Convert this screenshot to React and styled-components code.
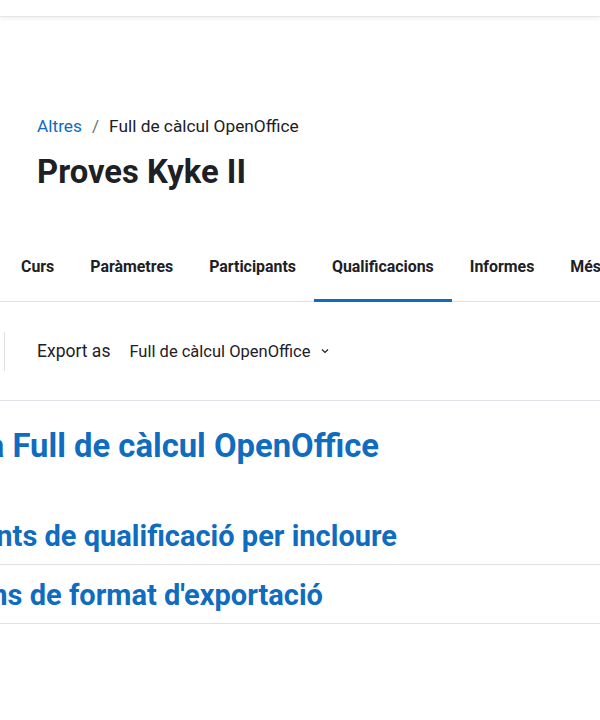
import React from "react";
import styled, { createGlobalStyle } from "styled-components";

const Global = createGlobalStyle`
  html, body { margin: 0; padding: 0; background: #fff; }
  body {
    width: 600px;
    overflow: hidden;
    font-family: Roboto, "Liberation Sans", sans-serif;
    color: #1d2125;
  }
`;

const Page = styled.div`
  width: 600px;
  overflow: hidden;
`;

const TopBar = styled.header`
  height: 16px;
  background: #fff;
  border-bottom: 1px solid #e6e6e6;
  box-shadow: 0 2px 4px rgba(0, 0, 0, 0.06);
`;

const PageHeader = styled.div`
  padding: 97px 0 0 37px;
`;

const Breadcrumb = styled.nav`
  display: flex;
  align-items: center;
  gap: 10px;
  font-size: 17.3px;
  line-height: 24px;
`;

const Crumb = styled.a`
  color: ${(p) => (p.$link ? "#0f6cbf" : "#1d2125")};
  text-decoration: none;
`;

const Sep = styled.span`
  color: #6a737b;
`;

const Title = styled.h1`
  margin: 14px 0 0;
  font-size: 32.8px;
  line-height: 40px;
  font-weight: 700;
`;

const Tabs = styled.nav`
  margin-top: 48px;
  display: flex;
  padding-left: 3px;
  border-bottom: 1px solid #dee2e6;
  white-space: nowrap;
`;

const Tab = styled.a`
  display: block;
  padding: 16px 18px 21px;
  font-size: 15.9px;
  line-height: 22px;
  font-weight: 700;
  color: #1d2125;
  text-decoration: none;
  border-bottom: 3px solid ${(p) => (p.$active ? "#0f6cbf" : "transparent")};
  margin-bottom: -1px;
`;

const Toolbar = styled.div`
  display: flex;
  align-items: center;
  height: 98px;
  border-bottom: 1px solid #dee2e6;
`;

const Divider = styled.span`
  width: 1px;
  height: 39px;
  margin-left: 4px;
  background: #dee2e6;
`;

const ToolLabel = styled.span`
  margin-left: 32px;
  font-size: 17.5px;
`;

const SelectBox = styled.div`
  display: flex;
  align-items: center;
  gap: 9px;
  margin-left: 19px;
  font-size: 16.5px;
  color: #1d2125;
`;

const Content = styled.main`
  padding-top: 25px;
`;

const Heading = styled.h2`
  display: flex;
  justify-content: flex-end;
  width: ${(p) => p.$end}px;
  margin: 0;
  font-size: 32.8px;
  line-height: 40px;
  font-weight: 700;
  color: #0f6cbf;
  white-space: nowrap;
`;

const Section = styled.section`
  border-bottom: 1px solid #dee2e6;
  padding: ${(p) => p.$pad};
`;

const SectionTitle = styled.h3`
  display: flex;
  justify-content: flex-end;
  width: ${(p) => p.$end}px;
  margin: 0;
  font-size: 29px;
  line-height: 34px;
  font-weight: 700;
  color: #0f6cbf;
  white-space: nowrap;
`;

const Chevron = () => (
  <svg width="10" height="10" viewBox="0 0 10 10" fill="none">
    <path d="M2 3.5 L5 6.5 L8 3.5" stroke="#1d2125" strokeWidth="1.2" />
  </svg>
);

export default function App() {
  return (
    <Page>
      <Global />
      <TopBar />
      <PageHeader>
        <Breadcrumb>
          <Crumb $link href="#">Altres</Crumb>
          <Sep>/</Sep>
          <Crumb>Full de càlcul OpenOffice</Crumb>
        </Breadcrumb>
        <Title>Proves Kyke II</Title>
      </PageHeader>
      <Tabs>
        <Tab>Curs</Tab>
        <Tab>Paràmetres</Tab>
        <Tab>Participants</Tab>
        <Tab $active>Qualificacions</Tab>
        <Tab>Informes</Tab>
        <Tab>Més</Tab>
      </Tabs>
      <Toolbar>
        <Divider />
        <ToolLabel>Export as</ToolLabel>
        <SelectBox>
          Full de càlcul OpenOffice
          <Chevron />
        </SelectBox>
      </Toolbar>
      <Content>
        <Heading $end={379}>
          <span>Exporta a Full de càlcul OpenOffice</span>
        </Heading>
        <Section $pad="53px 0 11px">
          <SectionTitle $end={397}>
            <span>Elements de qualificació per incloure</span>
          </SectionTitle>
        </Section>
        <Section $pad="13px 0 11px">
          <SectionTitle $end={323}>
            <span>Opcions de format d'exportació</span>
          </SectionTitle>
        </Section>
      </Content>
    </Page>
  );
}
